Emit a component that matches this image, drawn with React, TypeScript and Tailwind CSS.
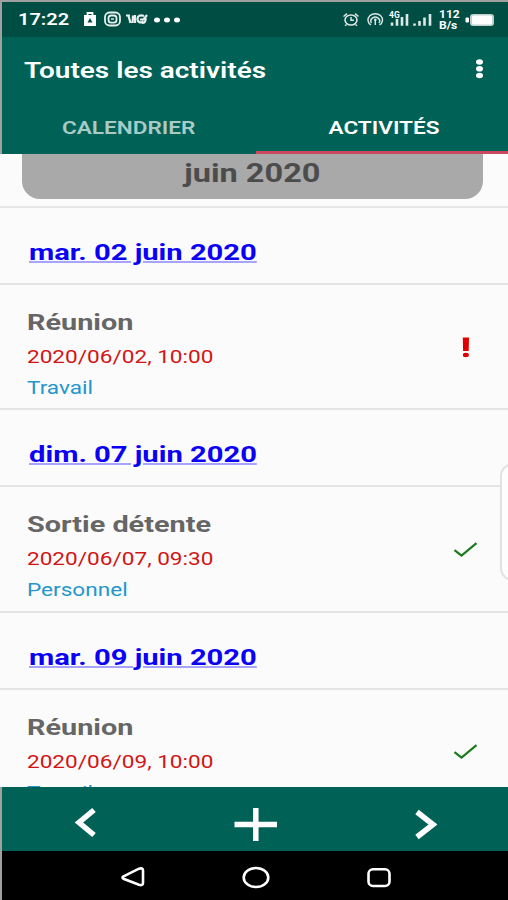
const days = [
    {
        label: "mar. 02 juin 2020",
        title: "Réunion",
        date: "2020/06/02, 10:00",
        category: "Travail",
        done: false,
    },
    {
        label: "dim. 07 juin 2020",
        title: "Sortie détente",
        date: "2020/06/07, 09:30",
        category: "Personnel",
        done: true,
    },
    {
        label: "mar. 09 juin 2020",
        title: "Réunion",
        date: "2020/06/09, 10:00",
        category: "Travail",
        done: true,
    },
];

function StatusBar() {
    return (
        <div className="flex h-[35px] shrink-0 items-center justify-between bg-[#004d43] pl-[16px] pr-[13px] text-white">
            <div className="flex items-center">
                <span className="w-[64px]">
                    <span className="inline-block origin-left scale-x-[1.25] text-[16px] font-semibold leading-5">17:22</span>
                </span>
                <svg width="98" height="18" viewBox="0 0 98 18" fill="none" className="-translate-y-px">
                    {/* Recycler */}
                    <path d="M2 5h12v11H2z" fill="#fff" />
                    <path d="M5.5 5V3h5v2" stroke="#fff" strokeWidth="1.8" />
                    <path d="M5.5 12.5L8 8l2.5 4.5z" fill="#004d43" />
                    {/* Camera */}
                    <rect x="23" y="2.5" width="15" height="13" rx="4.5" stroke="#e6efed" strokeWidth="1.8" />
                    <rect x="26.5" y="5.5" width="8" height="7.2" rx="2.6" stroke="#e6efed" strokeWidth="1.8" />
                    <path d="M29 9h3" stroke="#e6efed" strokeWidth="1.4" />
                    {/* Script logo */}
                    <path
                        d="M44 5.500h4M46.500 6l2 7M51 5.500l-.5 7.500M53 5v8M62 6c-4-1.500-6.500 0-6.500 3s3 4.500 6 2.500M58 9.500h3.500l3.500-4.500M60 13c3 0 4-2 3.500-5"
                        stroke="#e6efed"
                        strokeWidth="2.2"
                    />
                    {/* More */}
                    <ellipse cx="75" cy="10" rx="3" ry="2.5" fill="#fff" />
                    <ellipse cx="85" cy="10" rx="3" ry="2.5" fill="#fff" />
                    <ellipse cx="95" cy="10" rx="3" ry="2.5" fill="#fff" />
                </svg>
            </div>
            <div className="flex items-center">
                <svg width="98" height="20" viewBox="0 0 98 20" fill="none" stroke="#dbe8e5" className="mr-1 -translate-x-px -translate-y-px">
                    {/* Alarm */}
                    <ellipse cx="15" cy="11" rx="6" ry="5" strokeWidth="1.6" />
                    <path d="M15 8v3.300h3M7.500 7.500l3.500-2.800M22.500 7.500L19 4.700M10.500 15.500l-1.500 1.300M19.500 15.500l1.500 1.300" strokeWidth="1.5" />
                    {/* Hotspot */}
                    <path d="M35 16a7.300 6.200 0 1 1 8.500 0" strokeWidth="1.4" />
                    <path d="M35.500 14a4.400 3.800 0 1 1 7.500 0M39.300 10.500V16" strokeWidth="1.4" />
                    <circle cx="39.3" cy="10.8" r="1.3" fill="#dbe8e5" stroke="none" />
                    {/* Signal */}
                    <path d="M56 13.500v3.300M61 10v6.800M66 8v8.800M71 5v11.800" strokeWidth="2.6" />
                    <path d="M78.500 14.500v2.300M83.500 12v4.800M88.500 8.500v8.300M94 5v11.800" strokeWidth="2.6" />
                    <text x="53" y="9" fontSize="8.500" fontWeight="700" fontFamily="Roboto, sans-serif" fill="#fff" stroke="none">
                        4G
                    </text>
                </svg>
                <div className="w-[24px] text-[10px] font-bold leading-[11px]">
                    <div className="origin-left scale-x-[1.2]">112</div>
                    <div className="origin-left scale-x-[1.2]">B/s</div>
                </div>
                <svg width="30" height="14" viewBox="0 0 30 14" className="ml-[2px]">
                    <rect x="5" y="1" width="24" height="12" rx="3" fill="#bdd0cc" />
                    <rect x="7" y="2.5" width="20" height="9" rx="1.5" fill="#fff" />
                    <rect x="0.5" y="4.5" width="3.5" height="5" rx="1" fill="#fff" />
                </svg>
            </div>
        </div>
    );
}

function Header() {
    return (
        <header className="h-[117px] shrink-0 bg-[#006156] text-white">
            <div className="flex h-[66px] items-center justify-between pl-[22px] pr-[24px]">
                <h1 className="mt-px origin-left scale-x-[1.27] text-[22px] font-semibold leading-6">Toutes les activités</h1>
                <svg width="9" height="20" viewBox="0 0 9 20" fill="#fff" className="-translate-y-px">
                    <ellipse cx="4.5" cy="3" rx="3.5" ry="2.8" />
                    <ellipse cx="4.5" cy="9.7" rx="3.5" ry="2.8" />
                    <ellipse cx="4.5" cy="16.5" rx="3.5" ry="2.8" />
                </svg>
            </div>
            <nav className="flex h-[51px] text-[17.5px] font-semibold leading-[50px]">
                <div className="flex w-[254px] justify-center text-[#a9cbc6]">
                    <span className="scale-x-[1.29]">CALENDRIER</span>
                </div>
                <div className="flex flex-1 justify-center border-b-[3px] border-[#cb4a62] pl-[3px]">
                    <span className="scale-x-[1.29]">ACTIVITÉS</span>
                </div>
            </nav>
        </header>
    );
}

function StatusIcon({ done }: { done: boolean }) {
    return done ? (
        <svg width="26" height="18" viewBox="0 0 26 18" fill="none">
            <path d="M2.500 9.200L9.500 14.600L24.500 2.200" stroke="#1c7a1c" strokeWidth="2.2" />
        </svg>
    ) : (
        <svg width="26" height="22" viewBox="0 0 26 22" fill="#e00000">
            <path d="M10.800 0.500h6.200l-.3 13.500h-5.600z" />
            <ellipse cx="13.9" cy="18" rx="3" ry="2.2" />
        </svg>
    );
}

export default function App() {
    return (
        <div className="h-[900px] w-[508px] overflow-hidden bg-[#fbfbfb] font-['Roboto',sans-serif]">
            <div className="flex h-full flex-col">
                <div className="border-l-2 border-t-2 border-[#a0a0a0]">
                    <StatusBar />
                    <Header />
                </div>

                {/* Activities */}
                <main className="relative h-[633px] shrink-0 overflow-hidden">
                    <div className="h-[54px] border-b-2 border-[#e6e6e6] pl-[22px] pr-[25px]">
                        <div className="flex h-[45px] justify-center rounded-b-[18px] bg-[#a9a9a9] text-[25px] font-bold leading-[39px] text-[#4c4c4c]">
                            <span className="scale-x-[1.3]">juin 2020</span>
                        </div>
                    </div>
                    {days.map((day) => (
                        <section key={day.label}>
                            <div className="h-[77px] border-b-2 border-[#e4e4e4] pl-[29px] pt-[30px]">
                                <span className="inline-block origin-left scale-x-[1.325] text-[22px] font-bold leading-[30px] text-[#0a00f5] underline decoration-[#a6a4ff] decoration-2 underline-offset-1">
                                    {day.label}
                                </span>
                            </div>
                            <div className="flex h-[125.3px] justify-between border-b-2 border-[#e4e4e4] pl-[27px] pr-[30px] pt-[24px]">
                                <div>
                                    <div className="origin-left scale-x-[1.31] text-[22px] font-bold leading-[28px] text-[#666]">{day.title}</div>
                                    <div className="mt-[5px] origin-left scale-x-[1.29] text-[17.5px] leading-[30px] text-[#d21414]">{day.date}</div>
                                    <div className="origin-left scale-x-[1.29] text-[17.5px] leading-[33px] text-[#2496cc]">{day.category}</div>
                                </div>
                                <div className="flex h-[77px] items-center">
                                    <StatusIcon done={day.done} />
                                </div>
                            </div>
                        </section>
                    ))}
                    {/* Edge handle */}
                    <div className="absolute -right-[18px] top-[309px] h-[118px] w-[26px] rounded-[14px] border-2 border-[#e2e2e2] bg-[#fdfdfd]" />
                </main>

                <footer className="flex h-[64px] shrink-0 items-center border-l-2 border-[#a0a0a0] bg-[#006156]">
                    <svg width="506" height="64" viewBox="0 0 506 64" fill="none" stroke="#fff">
                        <path d="M92 23L77 35.500L92 48" strokeWidth="5.5" />
                        <path d="M232.500 37.500H275M253.800 21v33" strokeWidth="5.5" />
                        <path d="M415 25L431 37.500L415 50" strokeWidth="5.5" />
                    </svg>
                </footer>

                {/* System navigation */}
                <div className="flex h-[49px] shrink-0 items-center border-l-2 border-[#a0a0a0] bg-black">
                    <svg width="506" height="49" viewBox="0 0 506 49" fill="none" stroke="#fff" strokeWidth="2.6">
                        <path d="M121.500 25.300L137 17.700Q141 16.500 141 19.500V32Q141 35 137 33.700L121.500 27.800Q119.500 26.500 121.500 25.300Z" />
                        <ellipse cx="254" cy="26.5" rx="12.3" ry="9.5" />
                        <rect x="366.5" y="18.3" width="21" height="16.7" rx="4.5" />
                    </svg>
                </div>
            </div>
        </div>
    );
}
